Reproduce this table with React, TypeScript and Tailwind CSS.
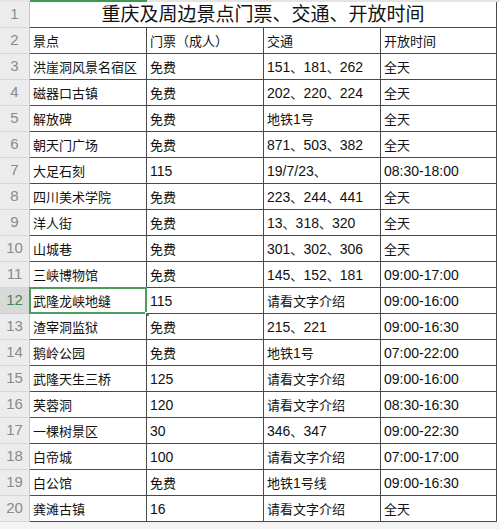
import React from 'react';

type Row = [string, string, string, string];

const rows: Row[] = [
    ['景点', '门票（成人）', '交通', '开放时间'],
    ['洪崖洞风景名宿区', '免费', '151、181、262', '全天'],
    ['磁器口古镇', '免费', '202、220、224', '全天'],
    ['解放碑', '免费', '地铁1号', '全天'],
    ['朝天门广场', '免费', '871、503、382', '全天'],
    ['大足石刻', '115', '19/7/23、', '08:30-18:00'],
    ['四川美术学院', '免费', '223、244、441', '全天'],
    ['洋人街', '免费', '13、318、320', '全天'],
    ['山城巷', '免费', '301、302、306', '全天'],
    ['三峡博物馆', '免费', '145、152、181', '09:00-17:00'],
    ['武隆龙峡地缝', '115', '请看文字介绍', '09:00-16:00'],
    ['渣宰洞监狱', '免费', '215、221', '09:00-16:30'],
    ['鹅岭公园', '免费', '地铁1号', '07:00-22:00'],
    ['武隆天生三桥', '125', '请看文字介绍', '09:00-16:00'],
    ['芙蓉洞', '120', '请看文字介绍', '08:30-16:30'],
    ['一棵树景区', '30', '346、347', '09:00-22:30'],
    ['白帝城', '100', '请看文字介绍', '07:00-17:00'],
    ['白公馆', '免费', '地铁1号线', '09:00-16:30'],
    ['龚滩古镇', '16', '请看文字介绍', '全天'],
];

const widths = ['w-[117px]', 'w-[117px]', 'w-[117px]', 'w-[116px]'];

// digits render a touch larger than the CJK glyphs, like the original sheet
const CellText: React.FC<{ text: string }> = ({ text }) => {
    const parts = text.match(/[\x00-\x7f]+|[^\x00-\x7f]+/g) || [];
    return (
        <span className="whitespace-nowrap">
            {parts.map((p, i) =>
                /^[\x00-\x7f]+$/.test(p) ? (
                    <span key={i} className="text-[14px]">{p}</span>
                ) : (
                    <span key={i} className="text-[13px]">{p}</span>
                )
            )}
        </span>
    );
};

const App: React.FC = () => {
    return (
        <div
            className="w-[500px] h-[529px] bg-white overflow-hidden text-[#111]"
            style={{ fontFamily: '"Liberation Sans", "Noto Sans CJK SC", sans-serif' }}
        >
            {/* column header edge */}
            <div className="flex h-[2px]">
                <div className="w-[30px] bg-[#e4e4e4]" />
                <div className="w-[117px] bg-[#3d9a52]" />
                <div className="flex-1 bg-[#e4e4e4]" />
            </div>

            {/* title row */}
            <div className="flex h-[26px]">
                <div className="w-[30px] shrink-0 bg-[#ececec] border-r border-b border-r-[#c4c4c4] border-b-[#d6d6d6] flex items-center justify-center text-[15px] text-[#8a8a8a]">
                    1
                </div>
                <div className="w-[467px] shrink-0 border-r border-b border-[#4a4a4a] flex items-center justify-center">
                    <span className="text-[19px] text-[#111] leading-none">重庆及周边景点门票、交通、开放时间</span>
                </div>
            </div>

            {rows.map((r, i) => {
                const n = i + 2;
                const sel = n === 12;
                return (
                    <div key={n} className="flex h-[26px]">
                        <div
                            className={
                                sel
                                    ? 'w-[30px] shrink-0 bg-[#d9d9d9] border-r border-b border-r-[#c4c4c4] border-b-[#cfcfcf] flex items-center justify-center text-[15px] text-[#3d8a55]'
                                    : 'w-[30px] shrink-0 bg-[#ececec] border-r border-b border-r-[#c4c4c4] border-b-[#d6d6d6] flex items-center justify-center text-[15px] text-[#8a8a8a]'
                            }
                        >
                            {n}
                        </div>
                        {r.map((c, j) => (
                            <div
                                key={j}
                                className={`${widths[j]} shrink-0 relative border-r border-b border-[#4a4a4a] flex items-center pl-[3px]`}
                            >
                                <CellText text={c} />
                                {sel && j === 0 && (
                                    <>
                                        <div className="absolute -left-px -top-px -right-px -bottom-px border-2 border-[#4a9d5c]" />
                                        <div className="absolute -right-[4px] -bottom-[4px] w-[5px] h-[5px] bg-[#4a9d5c] border border-white" />
                                    </>
                                )}
                            </div>
                        ))}
                    </div>
                );
            })}
            <div className="h-[7px] bg-[#f4f4f4]" />
        </div>
    );
};

export default App;
